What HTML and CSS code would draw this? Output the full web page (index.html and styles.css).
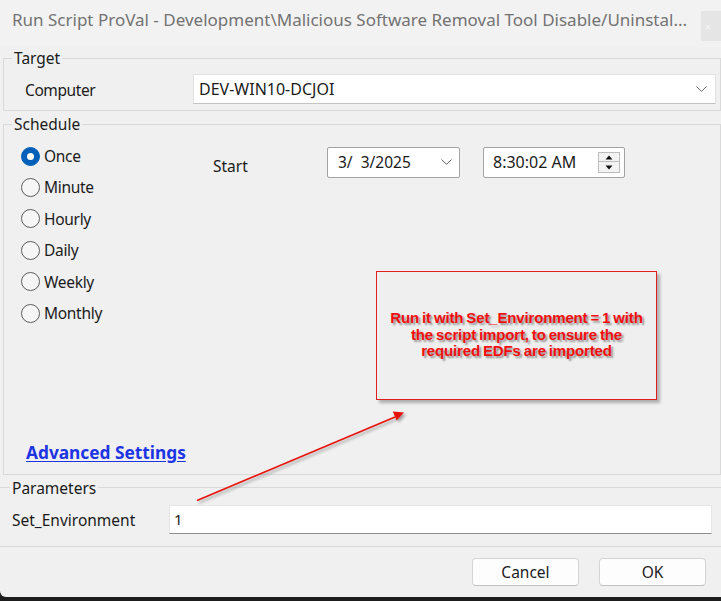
FILE: index.html
```html
<!DOCTYPE html>
<html>
<head>
<meta charset="utf-8">
<title>Run Script</title>
<link rel="stylesheet" href="styles.css">
</head>
<body>
<div class="dialog">
  <div class="titlebar">
    <span class="title">Run Script ProVal - Development\Malicious Software Removal Tool Disable/Uninstal...</span>
    <span class="close">×</span>
  </div>

  <fieldset class="group target">
    <legend>Target</legend>
    <div class="target-row">
      <span class="field-label">Computer</span>
      <div class="combo">
        <span class="combo-text">DEV-WIN10-DCJOI</span>
        <svg class="chev" width="11" height="6" viewBox="0 0 11 6"><path d="M0.5 0.5 L5.5 5.3 L10.5 0.5" fill="none" stroke="#606060" stroke-width="1"/></svg>
      </div>
    </div>
  </fieldset>

  <fieldset class="group schedule">
    <legend>Schedule</legend>
    <div class="sched-body">
      <div class="radios">
        <div class="radio checked"><span class="dot"></span><span>Once</span></div>
        <div class="radio"><span class="dot"></span><span>Minute</span></div>
        <div class="radio"><span class="dot"></span><span>Hourly</span></div>
        <div class="radio"><span class="dot"></span><span>Daily</span></div>
        <div class="radio"><span class="dot"></span><span>Weekly</span></div>
        <div class="radio"><span class="dot"></span><span>Monthly</span></div>
      </div>
      <div class="start-row">
        <span class="start-label">Start</span>
        <div class="picker date-picker">
          <span class="picker-text">3/&nbsp;&nbsp;3/2025</span>
          <svg class="chev" width="11" height="6" viewBox="0 0 11 6"><path d="M0.5 0.5 L5.5 5.3 L10.5 0.5" fill="none" stroke="#606060" stroke-width="1"/></svg>
        </div>
        <div class="picker time-picker">
          <span class="picker-text time-text">8:30:02 AM</span>
          <div class="spin">
            <span class="spin-btn"><svg width="8" height="5" viewBox="0 0 8 5"><path d="M4 0.5 L7.5 4.5 L0.5 4.5 Z" fill="#111"/></svg></span>
            <span class="spin-btn"><svg width="8" height="5" viewBox="0 0 8 5"><path d="M0.5 0.5 L7.5 0.5 L4 4.5 Z" fill="#111"/></svg></span>
          </div>
        </div>
      </div>
    </div>
    <a class="adv" href="#">Advanced Settings</a>
  </fieldset>

  <fieldset class="group params">
    <legend>Parameters</legend>
    <div class="params-row">
      <span class="param-label">Set_Environment</span>
      <div class="text-input">1</div>
    </div>
  </fieldset>

  <div class="buttons">
    <button class="btn">Cancel</button>
    <button class="btn">OK</button>
  </div>

  <div class="note">Run it with Set_Environment = 1 with<br>the script import, to ensure the<br>required EDFs are imported</div>

  <svg class="arrow" width="721" height="601" viewBox="0 0 721 601">
    <line x1="197" y1="500.5" x2="395" y2="417" stroke="#e8120c" stroke-width="1.6"/>
    <path d="M404 412.5 L396.6 420.6 L392.8 411.6 Z" fill="#e8120c"/>
  </svg>
</div>
<div class="desk"></div>
</body>
</html>
```

FILE: styles.css
```css
* {
  box-sizing: border-box;
}

html, body {
  margin: 0;
  padding: 0;
}

body {
  width: 721px;
  height: 601px;
  overflow: hidden;
  background: #1d1d1d;
  font-family: "Noto Sans", "Open Sans", sans-serif;
  font-size: 15.5px;
  color: #1b1b1b;
}

.dialog {
  position: relative;
  width: 721px;
  height: 597px;
  background: #f0f0f0;
  border-bottom-left-radius: 6px;
}

.titlebar {
  height: 47px;
  display: flex;
  align-items: flex-start;
  padding-left: 12px;
  background: #f2f2f2;
}

.title {
  flex: 1;
  min-width: 0;
  margin-top: 8px;
  line-height: 24px;
  font-size: 17px;
  color: #727272;
  white-space: nowrap;
  overflow: hidden;
}

.close {
  width: 20px;
  height: 30px;
  margin-top: 11px;
  background: #e5e5e5;
  color: #f6f6f6;
  font-size: 11px;
  display: flex;
  align-items: center;
  justify-content: center;
  padding-right: 6px;
}

fieldset.group {
  margin: 0 0 0 3px;
  padding: 0;
  min-width: 0;
  border: 1px solid #d9d9d9;
}

fieldset.group legend {
  margin-left: 8px;
  padding: 0 2px;
  font-size: 15.5px;
  line-height: 22px;
}

.target-row {
  display: flex;
  align-items: center;
  padding: 5px 4px 6px 21px;
}

.field-label {
  width: 168px;
  padding-top: 2px;
  letter-spacing: -0.4px;
}

.combo {
  flex: 1;
  height: 30px;
  display: flex;
  align-items: center;
  justify-content: space-between;
  padding: 0 8px 0 5px;
  background: #ffffff;
  border: 1px solid #e1e1e1;
  border-bottom-color: #c4c4c4;
}

.combo-text {
  font-size: 16px;
}

fieldset.schedule {
  margin-top: 2px;
}

.sched-body {
  display: flex;
  padding-top: 5.4px;
}

.radios {
  width: 209px;
  padding-left: 17px;
}

.radio {
  height: 31.4px;
  display: flex;
  align-items: center;
  gap: 4px;
  letter-spacing: -0.3px;
}

.dot {
  width: 19px;
  height: 19px;
  border-radius: 50%;
  border: 1px solid #5c5c5c;
  background: #f6f6f6;
  display: flex;
  align-items: center;
  justify-content: center;
}

.radio.checked .dot {
  border-color: #005fb8;
  background: #005fb8;
}

.radio.checked .dot::after {
  content: "";
  width: 7px;
  height: 7px;
  border-radius: 50%;
  background: #ffffff;
}

.start-row {
  display: flex;
  align-items: flex-start;
  margin-top: 6.6px;
}

.start-label {
  width: 114px;
  padding-top: 8px;
  line-height: 22px;
}

.picker {
  height: 31px;
  display: flex;
  align-items: center;
  justify-content: space-between;
  background: #ffffff;
  border: 1px solid #a3a3a3;
  border-radius: 2px;
}

.date-picker {
  width: 133px;
  padding: 0 7px 0 10px;
  margin-right: 23px;
}

.time-picker {
  width: 142px;
  padding: 0 4px 0 9px;
}

.picker-text {
  font-size: 15.5px;
}

.time-text {
  font-size: 16px;
}

.spin {
  display: flex;
  flex-direction: column;
  width: 22px;
}

.spin-btn {
  height: 10.5px;
  display: flex;
  align-items: center;
  justify-content: center;
  background: #f3f3f3;
  border: 1px solid #bcbcbc;
}

.spin-btn + .spin-btn {
  border-top: 0;
}

.adv {
  display: inline-block;
  margin: 113.2px 0 10px 22px;
  font-size: 17.3px;
  font-weight: bold;
  line-height: 22px;
  color: #1c34e4;
  text-decoration: underline;
  text-underline-offset: 2px;
}

fieldset.params {
  margin: 2px 0 0 0;
  border-left: 0;
  border-right: 0;
}

fieldset.params legend {
  margin-left: 10px;
}

.params-row {
  display: flex;
  align-items: center;
  padding: 6px 9px 12px 12px;
}

.param-label {
  width: 157px;
  padding-top: 2px;
}

.text-input {
  flex: 1;
  height: 29px;
  display: flex;
  align-items: center;
  padding-left: 4px;
  background: #ffffff;
  border: 1px solid #e6e6e6;
  border-bottom-color: #8e8e8e;
  font-size: 15px;
}

.buttons {
  display: flex;
  justify-content: flex-end;
  gap: 20px;
  margin-top: 11px;
  padding-right: 15px;
}

.btn {
  width: 107px;
  height: 28px;
  padding: 0;
  font-family: inherit;
  font-size: 15.5px;
  color: #1b1b1b;
  background: #fdfdfd;
  border: 1px solid #d4d4d4;
  border-bottom-color: #c2c2c2;
  border-radius: 4px;
}

.note {
  position: absolute;
  left: 376px;
  top: 271px;
  width: 281px;
  height: 129px;
  padding-top: 38px;
  border: 1px solid #e0211b;
  background: #efefef;
  box-shadow: 3px 3px 3px rgba(0, 0, 0, 0.28);
  text-align: center;
  font-family: "Liberation Sans", Arial, sans-serif;
  font-weight: bold;
  font-size: 15px;
  line-height: 16.6px;
  letter-spacing: -0.15px;
  word-spacing: -1px;
  color: #f20d0d;
  text-shadow: 2px 2px 2px rgba(0, 0, 0, 0.4);
}

.arrow {
  position: absolute;
  left: 0;
  top: 0;
  pointer-events: none;
  filter: drop-shadow(2px 2px 1.5px rgba(0, 0, 0, 0.35));
}

.desk {
  height: 4px;
  background: #1d1d1d;
}
```
